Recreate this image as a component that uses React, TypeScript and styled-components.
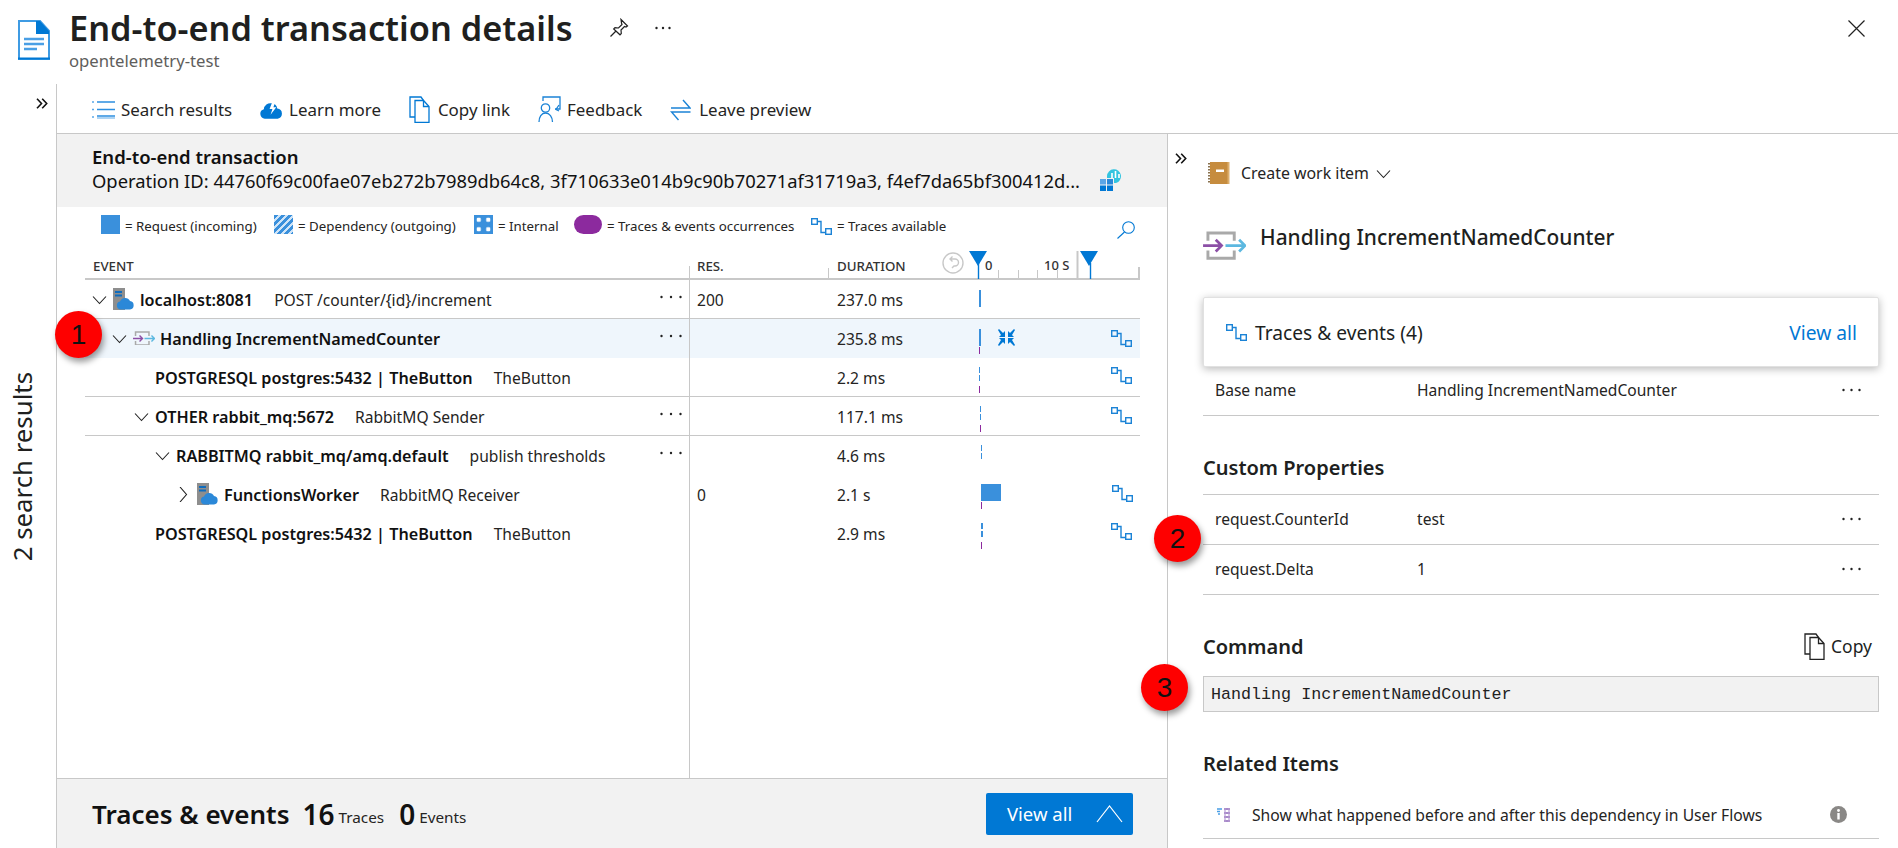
import React from 'react';
import styled, { createGlobalStyle } from 'styled-components';

const FONT = '"Noto Sans", "Open Sans", Arial, sans-serif';
const BLUE = '#0078d4';
const BAR = '#3a90dc';
const PURPLE = '#8c2a9e';
const LINE = '#c8c8c8';

const GlobalStyle = createGlobalStyle`
html, body { margin: 0; padding: 0; background: #fff; }
body { font-family: ${FONT}; color: #111; }
* { box-sizing: border-box; }
`;

// ---------- drawings ----------

const DocIcon = () => (
  <svg width="32" height="40" viewBox="0 0 32 40">
    <path d="M1 1h21l9 10v28H1z" fill="#fff" stroke="#3f9be3" strokeWidth="2" />
    <path d="M18 1h4l9 10v3H18z" fill={BLUE} />
    <path d="M6 19h20M6 24h20M6 29h13" stroke="#4a9fe5" strokeWidth="2.6" />
    <path d="M0 38.5h32" stroke={BLUE} strokeWidth="2" />
  </svg>
);

const PinIcon = () => (
  <svg width="20" height="20" viewBox="0 0 20 20" fill="none" stroke="#222" strokeWidth="1.2">
    <path d="M12 1.5l6.5 6.5-1.5 1-1.5-.5-3.5 3.5.3 3.5-1.3 1.3L4.7 11l1.3-1.3 3.5.3L13 6.5l-.5-1.5z" />
    <path d="M7 13l-5.5 5.5" />
  </svg>
);

const CloseIcon = () => (
  <svg width="17" height="17" viewBox="0 0 17 17" fill="none" stroke="#222" strokeWidth="1.2">
    <path d="M.5.5l16 16M16.500.5l-16 16" />
  </svg>
);

const Dots = ({ width = 22, color = '#222' }: { width?: number; color?: string }) => (
  <svg width={width} height="4" viewBox={`0 0 ${width} 4`} fill={color}>
    <circle cx="1.5" cy="2" r="1.2" />
    <circle cx={width / 2} cy="2" r="1.2" />
    <circle cx={width - 1.5} cy="2" r="1.2" />
  </svg>
);

const DoubleChevron = () => (
  <svg width="12" height="11" viewBox="0 0 12 11" fill="none" stroke="#111" strokeWidth="1.6">
    <path d="M1 .8l4.5 4.7L1 10.2M6.2.8l4.5 4.7-4.5 4.7" />
  </svg>
);

const ListIcon = () => (
  <svg width="23" height="18" viewBox="0 0 23 18" fill="none" stroke="#2d8fe0" strokeWidth="1.4">
    <path d="M5 1h18M5 8.500h18M5 15h18" />
    <path d="M5 17h18" stroke="#8cc2ee" />
    <path d="M0 1h2M0 8.500h2M0 16h2" stroke="#5aa8e8" />
  </svg>
);

const CloudIcon = () => (
  <svg width="23" height="20" viewBox="0 0 24 20">
    <path d="M5 19a5 5 0 0 1-1-9.8A7 7 0 0 1 12 3a6 6 0 0 1 6 5.5A5.3 5.3 0 0 1 18.500 19z" fill={BLUE} />
    <path d="M13 1l-3 8h3l-2 6 6-8h-3l2-6z" fill="#fff" />
  </svg>
);

const CopyIcon = ({ color = BLUE }: { color?: string }) => (
  <svg width="21" height="27" viewBox="0 0 21 27" fill="none" stroke={color} strokeWidth="1.3">
    <path d="M6 21H1V1h11l2.500 3.500" />
    <path d="M6 4.500h8.500l5.500 6v16H6z" />
    <path d="M14.500 4.500v6H20" />
  </svg>
);

const FeedbackIcon = () => (
  <svg width="24" height="27" viewBox="0 0 24 27" fill="none" stroke="#1b83d6" strokeWidth="1.3">
    <path d="M5 5V1h17v12h-5" />
    <path d="M21 9l-3 4.500 3 1.500" />
    <circle cx="7.500" cy="12" r="4.200" />
    <path d="M1 26c0-5 2.500-9 6.500-9s7 4 7 9" />
  </svg>
);

const SwapIcon = () => (
  <svg width="21" height="24" viewBox="0 0 21 24" fill="none" stroke="#1b83d6" strokeWidth="1.4">
    <path d="M1 10h19l-7-8M20.500 14H1.500l7 8" />
  </svg>
);

const InsightsIcon = () => (
  <svg width="23" height="22" viewBox="0 0 23 22">
    <rect x="0" y="10" width="6" height="5.500" fill="#5ca6e6" />
    <rect x="7" y="10" width="6" height="5.500" fill="#2b88d8" />
    <rect x="0" y="16.500" width="6" height="5.500" fill={BLUE} />
    <rect x="7" y="16.500" width="6" height="5.500" fill={BLUE} />
    <path d="M7 9V7a7 7 0 1 1 9 7h-2V9z" fill="#32c4e0" />
    <path d="M12 4v5M15.500 2v7M19 5v4" stroke="#fff" strokeWidth="1.6" />
  </svg>
);

const SearchIcon = () => (
  <svg width="18" height="18" viewBox="0 0 18 18" fill="none" stroke={BLUE} strokeWidth="1.1">
    <circle cx="11.500" cy="6.500" r="5.800" />
    <path d="M7.500 11L.5 17.500" />
  </svg>
);

const TraceIcon = () => (
  <svg width="21" height="17" viewBox="0 0 21 17" fill="none" stroke="#1b83d6" strokeWidth="1.4">
    <rect x=".7" y=".7" width="5.600" height="5.600" />
    <path d="M6.500 3.500H10v11h4.500" />
    <rect x="14.700" y="10.700" width="5.600" height="5.600" />
  </svg>
);

const ServerIcon = () => (
  <svg width="22" height="22" viewBox="0 0 22 22">
    <rect x="0" y="0" width="12" height="22" fill="#8e8e8e" />
    <path d="M2 4h7M2 7.500h7" stroke="#0f6cbd" strokeWidth="2" />
    <path d="M8 21.500a4 4 0 0 1-1-7.900A5.500 5.500 0 0 1 17 13a4.300 4.300 0 0 1 0 8.500z" fill="#2b88d8" />
  </svg>
);

const SpanIcon = ({ size = 22 }: { size?: number }) => (
  <svg width={size} height={size * 0.68} viewBox="0 0 44 30" fill="none">
    <path d="M5 10V2h27v8M5 20v8h27v-8" stroke="#a9a9a9" strokeWidth="3" />
    <path d="M0 15h19M13 9l6 6-6 6" stroke="#8c4fa6" strokeWidth="2.800" />
    <path d="M23 15h20M37 9l6 6-6 6" stroke="#5cb8e0" strokeWidth="2.800" />
  </svg>
);

const BookIcon = () => (
  <svg width="22" height="22" viewBox="0 0 22 22">
    <rect x="2" y="0" width="19" height="22" fill="#c68c3e" />
    <rect x="19.500" y="0" width="2" height="22" fill="#dcae6c" />
    <path d="M1 1v20" stroke="#8a7350" strokeWidth="2" strokeDasharray="1.500 1.500" />
    <rect x="8" y="7.500" width="8" height="2.500" fill="#fff" />
  </svg>
);

const FlowIcon = () => (
  <svg width="14" height="14" viewBox="0 0 14 14">
    <path d="M0 1h5M0 3.500h3M1 6h2" stroke="#4a9fe5" strokeWidth="1.3" />
    <path d="M7 1h6M7 5h6M7 9h6M7 13h6" stroke="#8a63b8" strokeWidth="1.500" />
    <path d="M8 0v14M12 0v14" stroke="#b79bd3" strokeWidth="1.200" />
  </svg>
);

const InfoIcon = () => (
  <svg width="17" height="17" viewBox="0 0 17 17">
    <circle cx="8.500" cy="8.500" r="8.500" fill="#8a8886" />
    <rect x="7.300" y="7" width="2.400" height="6.500" fill="#fff" />
    <circle cx="8.500" cy="4.500" r="1.400" fill="#fff" />
  </svg>
);

const Chevron = ({ dir }: { dir: 'down' | 'right' }) => (
  <svg width="15" height="15" viewBox="0 0 15 15" fill="none" stroke="#222" strokeWidth="1.1">
    {dir === 'down' ? <path d="M1 4.500l6.500 7 6.500-7" /> : <path d="M4 0l6.500 7.500L4 15" />}
  </svg>
);

const UndoIcon = () => (
  <svg width="22" height="22" viewBox="0 0 22 22" fill="none" stroke="#c8c8c8" strokeWidth="1.4">
    <circle cx="11" cy="11" r="10" />
    <path d="M8 7h5a3.500 3.500 0 0 1 0 7h-1l-2 2M10.500 4.500L8 7l2.500 2.500" />
  </svg>
);

const CompressIcon = () => (
  <svg width="17" height="17" viewBox="0 0 17 17" x="29" y="10" fill={BLUE}>
    <path d="M0 1l1-1 4 4 2-2v6H1l2-2zM17 1l-1-1-4 4-2-2v6h6l-2-2zM0 16l1 1 4-4 2 2V9H1l2 2zM17 16l-1 1-4-4-2 2V9h6l-2 2z" />
  </svg>
);

const TimeAxis = () => (
  <svg width="171" height="35" viewBox="0 0 171 35">
    <path d="M0 6h18l-9 15z" fill={BLUE} />
    <path d="M9.500 18v16" stroke={BLUE} strokeWidth="1.4" />
    <text x="16" y="25" fontFamily={FONT} fontSize="13" fontWeight="500" fill="#333">0</text>
    <path d="M29.500 25v9M49.500 25v9M68.500 25v9M88.500 25v9" stroke={LINE} />
    <text x="75" y="25" fontFamily={FONT} fontSize="13" fontWeight="500" fill="#333">10 S</text>
    <path d="M108.500 6v28" stroke={LINE} strokeWidth="2" />
    <path d="M111 6h18l-9 15z" fill={BLUE} />
    <path d="M121.500 18v16" stroke={BLUE} strokeWidth="1.4" />
    <path d="M170 22v12" stroke={LINE} strokeWidth="2" />
  </svg>
);

type Mark = { x: number; y: number; w: number; h: number; color: string; dash?: string };

const blueBar = (x: number, w = 2): Mark => ({ x, y: 10, w, h: 17, color: BAR });
const dashed = (x: number, w = 1): Mark => ({ x, y: 9, w, h: 16, color: BAR, dash: '6 2' });
const purpleTick = (x: number, y = 28): Mark => ({ x, y, w: 1, h: 7, color: PURPLE });

const Timeline = ({ marks, collapse, trace, traceX = 142, traceY = 10 }: { marks: Mark[]; collapse?: boolean; trace?: boolean; traceX?: number; traceY?: number }) => (
  <svg width="171" height="38" viewBox="0 0 171 38">
    {marks.map((m, i) =>
      m.dash ? (
        <path key={i} d={`M${m.x + m.w / 2} ${m.y}v${m.h}`} stroke={m.color} strokeWidth={m.w} strokeDasharray={m.dash} />
      ) : (
        <rect key={i} x={m.x} y={m.y} width={m.w} height={m.h} fill={m.color} />
      )
    )}
    {collapse && <CompressIcon />}
    {trace && (
      <g transform={`translate(${traceX} ${traceY})`} fill="none" stroke="#1b83d6" strokeWidth="1.4">
        <rect x=".7" y=".7" width="5.600" height="5.600" />
        <path d="M6.500 3.500H10v11h4.500" />
        <rect x="14.700" y="10.700" width="5.600" height="5.600" />
      </g>
    )}
  </svg>
);

// ---------- layout ----------

const Page = styled.div`
position: relative;
width: 1898px;
height: 848px;
overflow: hidden;
display: flex;
flex-direction: column;
`;

const TitleBar = styled.header`
height: 84px;
flex: none;
display: flex;
padding: 20px 33px 0 18px;
`;

const TitleBlock = styled.div`
margin-left: 19px;
margin-top: -14px;
`;

const TitleRow = styled.div`
display: flex;
align-items: center;
height: 44px;
`;

const Title = styled.h1`
margin: 0;
font-size: 34.300px;
font-weight: 600;
line-height: 44px;
color: #201f1e;
`;

const TitleActions = styled.div`
display: flex;
align-items: center;
margin-left: 36px;
gap: 26px;
`;

const Subtitle = styled.div`
font-size: 16.700px;
line-height: 22px;
color: #605e5c;
`;

const Close = styled.div`
margin-left: auto;
display: flex;
`;

const Main = styled.div`
flex: 1;
display: flex;
min-height: 0;
`;

const Rail = styled.aside`
width: 57px;
flex: none;
border-right: 1px solid ${LINE};
display: flex;
flex-direction: column;
padding-top: 14px;
`;

const RailToggle = styled.div`
align-self: flex-end;
margin-right: 8px;
display: flex;
`;

const RailLabel = styled.div`
writing-mode: vertical-rl;
transform: rotate(180deg);
font-size: 25.800px;
line-height: 30px;
margin: 263px 0 0 7px;
align-self: flex-start;
color: #201f1e;
`;

const Content = styled.div`
flex: 1;
display: flex;
flex-direction: column;
min-width: 0;
`;

const Toolbar = styled.nav`
height: 50px;
flex: none;
display: flex;
align-items: center;
gap: 28px;
padding: 2px 0 0 35px;
border-bottom: 1px solid ${LINE};
`;

const ToolItem = styled.div`
display: flex;
align-items: center;
font-size: 16.900px;
color: #252423;
`;

const ToolIcon = styled.span`
width: 29px;
flex: none;
display: flex;
`;

const Panes = styled.div`
flex: 1;
display: flex;
min-height: 0;
`;

const LeftPane = styled.section`
width: 1111px;
flex: none;
border-right: 1px solid ${LINE};
display: flex;
flex-direction: column;
`;

const Summary = styled.div`
height: 73px;
flex: none;
background: #f2f2f2;
padding: 11px 0 0 35px;
display: flex;
flex-direction: column;
`;

const SummaryTitle = styled.div`
font-size: 18.500px;
font-weight: 600;
line-height: 24px;
`;

const SummaryLine = styled.div`
display: flex;
align-items: center;
font-size: 18.370px;
line-height: 24px;
white-space: nowrap;
`;

const SummaryIcon = styled.span`
margin-left: 20px;
display: flex;
margin-top: -3px;
`;

const Legend = styled.div`
height: 38px;
flex: none;
display: flex;
align-items: center;
padding: 0 32px 0 44px;
font-size: 13.300px;
color: #252423;
`;

const LegendItem = styled.div<{ $w: number }>`
display: flex;
align-items: center;
gap: 5px;
width: ${(p) => p.$w}px;
flex: none;
white-space: nowrap;
`;

const Swatch = styled.span<{ $kind: 'solid' | 'hatch' | 'grid' | 'pill' }>`
display: block;
height: 19px;
margin-top: -4px;
width: ${(p) => (p.$kind === 'pill' ? 28 : 19)}px;
border-radius: ${(p) => (p.$kind === 'pill' ? '10px' : '0')};
background: ${(p) =>
  p.$kind === 'pill'
    ? PURPLE
    : p.$kind === 'hatch'
    ? `repeating-linear-gradient(135deg, ${BAR} 0 3px, #cfe4f7 3px 5px)`
    : p.$kind === 'grid'
    ? `radial-gradient(circle, #fff 0 2px, transparent 2.500px) 0 0 / 9.500px 9.500px, ${BAR}`
    : BAR};
`;

const LegendSearch = styled.span`
margin-left: auto;
display: flex;
margin-top: 8px;
`;

const Table = styled.div`
flex: 1;
position: relative;
padding: 0 27px 0 28px;
min-height: 0;
&::before {
  content: '';
  position: absolute;
  left: 632px;
  top: 21px;
  bottom: 0;
  width: 1px;
  background: ${LINE};
}
`;

const HeadRow = styled.div`
display: grid;
grid-template-columns: 605px 138px 141px 171px;
height: 35px;
border-bottom: 2px solid ${LINE};
font-size: 13.300px;
font-weight: 500;
color: #333;
`;

const HeadCell = styled.div<{ $pad?: number; $tick?: boolean }>`
position: relative;
display: flex;
justify-content: space-between;
padding: 12px 5px 0 ${(p) => p.$pad ?? 7}px;
line-height: 18px;
${(p) =>
  p.$tick &&
  `&::before { content: ''; position: absolute; left: 0; bottom: 0; width: 1px; height: 12px; background: ${LINE}; }`}
`;

const UndoWrap = styled.span`
margin-top: -5px;
display: flex;
`;

const Row = styled.div<{ $active?: boolean; $line?: boolean }>`
display: grid;
grid-template-columns: 605px 138px 141px 171px;
height: 39px;
background: ${(p) => (p.$active ? '#eff6fc' : 'transparent')};
border-bottom: 1px solid ${(p) => (p.$line ? LINE : 'transparent')};
font-size: 15.600px;
`;

const EventCell = styled.div<{ $indent: number }>`
display: flex;
align-items: center;
padding: 2px 8px 0 ${(p) => p.$indent}px;
white-space: nowrap;
`;

const ChevronSlot = styled.span`
width: 21px;
flex: none;
display: flex;
margin-top: -2px;
`;

const EventIcon = styled.span`
width: 27px;
flex: none;
display: flex;
margin-top: -2px;
`;

const EventName = styled.span`
font-size: 16.200px;
font-weight: 600;
color: #111;
`;

const EventDetail = styled.span`
margin-left: 21px;
color: #252423;
`;

const RowDots = styled.span`
margin-left: auto;
display: flex;
margin-top: -6px;
`;

const ValueCell = styled.div<{ $pad: number }>`
display: flex;
align-items: center;
padding: 2px 0 0 ${(p) => p.$pad}px;
color: #252423;
`;

const ChartCell = styled.div`
display: flex;
`;

const BottomBar = styled.footer`
height: 70px;
flex: none;
background: #f2f2f2;
border-top: 1px solid ${LINE};
display: flex;
align-items: center;
padding: 0 34px 0 35px;
`;

const BottomTitle = styled.span`
font-size: 26px;
font-weight: 600;
margin-right: 13px;
`;

const BottomCount = styled.span`
font-size: 28px;
font-weight: 600;
margin-right: 4px;
`;

const BottomUnit = styled.span`
font-size: 15.300px;
margin-top: 7px;
margin-right: 15px;
color: #252423;
`;

const PrimaryButton = styled.div`
margin-left: auto;
width: 147px;
height: 42px;
background: ${BLUE};
border-radius: 2px;
color: #fff;
display: flex;
align-items: center;
justify-content: space-between;
padding: 0 10px 0 21px;
font-size: 18.500px;
`;

const RightPane = styled.aside`
flex: 1;
display: flex;
min-width: 0;
`;

const PaneRail = styled.div`
width: 35px;
flex: none;
padding: 13px 0 0 7px;
`;

const PaneBody = styled.div`
flex: 1;
margin-right: 19px;
min-width: 0;
`;

const WorkItem = styled.div`
display: flex;
align-items: center;
height: 24px;
margin: 27px 0 0 5px;
font-size: 15.900px;
color: #252423;
gap: 11px;
`;

const WorkChevron = styled.span`
display: flex;
margin-left: -4px;
`;

const SpanHeading = styled.div`
display: flex;
margin-top: 38px;
height: 74px;
padding-top: 8px;
`;

const SpanTitle = styled.h2`
margin: -8px 0 0 14px;
font-size: 20.900px;
line-height: 28px;
font-weight: 500;
color: #201f1e;
`;

const Card = styled.div`
height: 70px;
display: flex;
align-items: center;
padding: 0 21px 0 22px;
background: #fff;
border: 1px solid #e1e1e1;
border-radius: 2px;
box-shadow: 0 2px 8px rgba(0, 0, 0, 0.28);
font-size: 19.200px;
position: relative;
`;

const CardTitle = styled.span`
margin-left: 8px;
color: #201f1e;
`;

const CardLink = styled.span`
margin-left: auto;
color: ${BLUE};
`;

const PropRow = styled.div<{ $h?: number; $top?: boolean }>`
display: flex;
align-items: center;
height: ${(p) => p.$h ?? 50}px;
padding: 0 18px 2px 12px;
border-bottom: 1px solid ${LINE};
${(p) => p.$top && `border-top: 1px solid ${LINE};`}
font-size: 15.600px;
color: #252423;
`;

const PropKey = styled.span`
width: 202px;
flex: none;
`;

const PropDots = styled.span`
margin-left: auto;
display: flex;
`;

const SectionHead = styled.div<{ $after?: number }>`
display: flex;
align-items: center;
height: 24px;
margin-top: 39px;
margin-bottom: ${(p) => p.$after ?? 0}px;
font-size: 20px;
font-weight: 600;
color: #201f1e;
`;

const CopyAction = styled.div`
margin-left: auto;
margin-right: 7px;
display: flex;
align-items: center;
gap: 6px;
font-size: 17.500px;
font-weight: 400;
`;

const CommandBox = styled.div`
height: 36px;
display: flex;
align-items: center;
padding: 0 7px;
background: #f2f2f2;
border: 1px solid ${LINE};
font-family: "Liberation Mono", monospace;
font-size: 16.700px;
color: #222;
`;

const RelatedRow = styled.div`
display: flex;
align-items: center;
height: 48px;
margin-top: 16px;
padding: 0 32px 0 14px;
border-bottom: 1px solid ${LINE};
font-size: 15.700px;
color: #252423;
`;

const RelatedText = styled.span`
margin-left: 21px;
`;

const RelatedInfo = styled.span`
margin-left: auto;
display: flex;
`;

const Badge = styled.div<{ $x: number; $y: number }>`
position: absolute;
left: ${(p) => p.$x}px;
top: ${(p) => p.$y}px;
width: 47px;
height: 47px;
border-radius: 50%;
background: #fe0000;
box-shadow: 2px 4px 6px rgba(0, 0, 0, 0.4);
display: flex;
align-items: center;
justify-content: center;
font-family: "Liberation Sans", Arial, sans-serif;
font-size: 28px;
color: #111;
`;

type EventRow = {
  indent: number;
  chevron?: 'down' | 'right';
  icon?: 'server' | 'span';
  name: string;
  detail?: string;
  dots?: boolean;
  res?: string;
  duration: string;
  line?: boolean;
  active?: boolean;
  chart: React.ComponentProps<typeof Timeline>;
};

const rows: EventRow[] = [
  { indent: 7, chevron: 'down', icon: 'server', name: 'localhost:8081', detail: 'POST /counter/{id}/increment', dots: true, res: '200', duration: '237.0 ms', line: true, chart: { marks: [blueBar(10)] } },
  { indent: 27, chevron: 'down', icon: 'span', name: 'Handling IncrementNamedCounter', dots: true, duration: '235.8 ms', active: true, chart: { marks: [blueBar(10), purpleTick(10)], collapse: true, trace: true, traceY: 11 } },
  { indent: 70, name: 'POSTGRESQL postgres:5432 | TheButton', detail: 'TheButton', duration: '2.2 ms', line: true, chart: { marks: [dashed(10), purpleTick(10)], trace: true, traceY: 9 } },
  { indent: 49, chevron: 'down', name: 'OTHER rabbit_mq:5672', detail: 'RabbitMQ Sender', dots: true, duration: '117.1 ms', line: true, chart: { marks: [dashed(11), purpleTick(11)], trace: true } },
  { indent: 70, chevron: 'down', name: 'RABBITMQ rabbit_mq/amq.default', detail: 'publish thresholds', dots: true, duration: '4.6 ms', chart: { marks: [dashed(12)] } },
  { indent: 91, chevron: 'right', icon: 'server', name: 'FunctionsWorker', detail: 'RabbitMQ Receiver', res: '0', duration: '2.1 s', chart: { marks: [{ ...blueBar(12, 20), y: 9 }, purpleTick(12, 27)], trace: true, traceX: 143 } },
  { indent: 70, name: 'POSTGRESQL postgres:5432 | TheButton', detail: 'TheButton', duration: '2.9 ms', chart: { marks: [dashed(12, 2), purpleTick(12)], trace: true, traceY: 9 } },
];

const App = () => (
  <>
    <GlobalStyle />
    <Page>
      <TitleBar>
        <DocIcon />
        <TitleBlock>
          <TitleRow>
            <Title>End-to-end transaction details</Title>
            <TitleActions>
              <PinIcon />
              <Dots width={16} />
            </TitleActions>
          </TitleRow>
          <Subtitle>opentelemetry-test</Subtitle>
        </TitleBlock>
        <Close><CloseIcon /></Close>
      </TitleBar>
      <Main>
        <Rail>
          <RailToggle>
            <DoubleChevron />
          </RailToggle>
          <RailLabel>2 search results</RailLabel>
        </Rail>
        <Content>
          <Toolbar>
            <ToolItem><ToolIcon><ListIcon /></ToolIcon>Search results</ToolItem>
            <ToolItem><ToolIcon><CloudIcon /></ToolIcon>Learn more</ToolItem>
            <ToolItem><ToolIcon><CopyIcon /></ToolIcon>Copy link</ToolItem>
            <ToolItem><ToolIcon><FeedbackIcon /></ToolIcon>Feedback</ToolItem>
            <ToolItem><ToolIcon><SwapIcon /></ToolIcon>Leave preview</ToolItem>
          </Toolbar>
          <Panes>
            <LeftPane>
              <Summary>
                <SummaryTitle>End-to-end transaction</SummaryTitle>
                <SummaryLine>
                  Operation ID: 44760f69c00fae07eb272b7989db64c8, 3f710633e014b9c90b70271af31719a3, f4ef7da65bf300412d...
                  <SummaryIcon><InsightsIcon /></SummaryIcon>
                </SummaryLine>
              </Summary>
              <Legend>
                <LegendItem $w={173}><Swatch $kind="solid" />= Request (incoming)</LegendItem>
                <LegendItem $w={200}><Swatch $kind="hatch" />= Dependency (outgoing)</LegendItem>
                <LegendItem $w={100}><Swatch $kind="grid" />= Internal</LegendItem>
                <LegendItem $w={237}><Swatch $kind="pill" />= Traces &amp; events occurrences</LegendItem>
                <LegendItem $w={140}><TraceIcon />= Traces available</LegendItem>
                <LegendSearch><SearchIcon /></LegendSearch>
              </Legend>
              <Table>
                <HeadRow>
                  <HeadCell $pad={8}>EVENT</HeadCell>
                  <HeadCell>RES.</HeadCell>
                  <HeadCell $pad={9} $tick>
                    DURATION
                    <UndoWrap><UndoIcon /></UndoWrap>
                  </HeadCell>
                  <ChartCell><TimeAxis /></ChartCell>
                </HeadRow>
                {rows.map((r, i) => (
                  <Row key={i} $active={r.active} $line={r.line}>
                    <EventCell $indent={r.indent}>
                      {r.chevron && <ChevronSlot><Chevron dir={r.chevron} /></ChevronSlot>}
                      {r.icon && <EventIcon>{r.icon === 'server' ? <ServerIcon /> : <SpanIcon />}</EventIcon>}
                      <EventName>{r.name}</EventName>
                      {r.detail && <EventDetail>{r.detail}</EventDetail>}
                      {r.dots && <RowDots><Dots /></RowDots>}
                    </EventCell>
                    <ValueCell $pad={7}>{r.res}</ValueCell>
                    <ValueCell $pad={9}>{r.duration}</ValueCell>
                    <ChartCell><Timeline {...r.chart} /></ChartCell>
                  </Row>
                ))}
              </Table>
              <BottomBar>
                <BottomTitle>Traces &amp; events</BottomTitle>
                <BottomCount>16</BottomCount>
                <BottomUnit>Traces</BottomUnit>
                <BottomCount>0</BottomCount>
                <BottomUnit>Events</BottomUnit>
                <PrimaryButton>
                  View all
                  <svg width="27" height="18" viewBox="0 0 27 18" fill="none" stroke="#fff" strokeWidth="1.2">
                    <path d="M1 17L13.500 1 26 17" />
                  </svg>
                </PrimaryButton>
              </BottomBar>
            </LeftPane>
            <RightPane>
              <PaneRail><DoubleChevron /></PaneRail>
              <PaneBody>
                <WorkItem>
                  <BookIcon />
                  Create work item
                  <WorkChevron><Chevron dir="down" /></WorkChevron>
                </WorkItem>
                <SpanHeading>
                  <SpanIcon size={43} />
                  <SpanTitle>Handling IncrementNamedCounter</SpanTitle>
                </SpanHeading>
                <Card>
                  <TraceIcon />
                  <CardTitle>Traces &amp; events (4)</CardTitle>
                  <CardLink>View all</CardLink>
                </Card>
                <PropRow $h={49}>
                  <PropKey>Base name</PropKey>
                  Handling IncrementNamedCounter
                  <PropDots><Dots width={19} /></PropDots>
                </PropRow>
                <SectionHead $after={15}>Custom Properties</SectionHead>
                <PropRow $top $h={51}>
                  <PropKey>request.CounterId</PropKey>
                  test
                  <PropDots><Dots width={19} /></PropDots>
                </PropRow>
                <PropRow>
                  <PropKey>request.Delta</PropKey>
                  1
                  <PropDots><Dots width={19} /></PropDots>
                </PropRow>
                <SectionHead $after={18}>
                  Command
                  <CopyAction><CopyIcon color="#222" />Copy</CopyAction>
                </SectionHead>
                <CommandBox>Handling IncrementNamedCounter</CommandBox>
                <SectionHead>Related Items</SectionHead>
                <RelatedRow>
                  <FlowIcon />
                  <RelatedText>Show what happened before and after this dependency in User Flows</RelatedText>
                  <RelatedInfo><InfoIcon /></RelatedInfo>
                </RelatedRow>
              </PaneBody>
            </RightPane>
          </Panes>
        </Content>
      </Main>
      <Badge $x={55} $y={311}>1</Badge>
      <Badge $x={1154} $y={515}>2</Badge>
      <Badge $x={1141} $y={664}>3</Badge>
    </Page>
  </>
);

export default App;
